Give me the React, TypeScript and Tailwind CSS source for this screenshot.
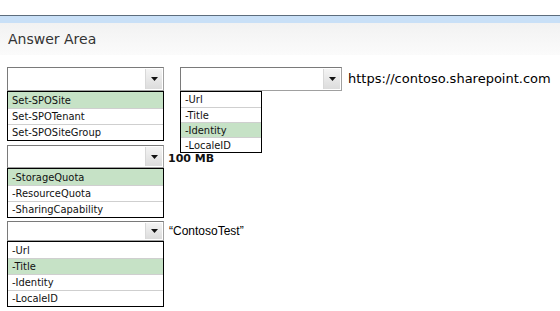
import React from "react";

const Arrow = () => (
  <div className="flex h-full w-[17px] items-center justify-center border-l border-[#d8d8d8] bg-gradient-to-b from-[#f4f4f4] to-[#dcdcdc]">
    <svg width="7" height="4" viewBox="0 0 7 4">
      <polygon points="0,0 7,0 3.5,4" fill="#111" />
    </svg>
  </div>
);

const Select = ({ h }: { h: string }) => (
  <div
    className={`flex ${h} w-full items-stretch justify-end border border-[#a0a0a0] border-t-[#7a7a7a] border-l-[#7a7a7a] bg-white p-[1px]`}
  >
    <Arrow />
  </div>
);

type Item = { t: string; on?: boolean };

const List = ({ items, w, rh }: { items: Item[]; w: string; rh: string }) => (
  <div
    className={`${w} border border-black bg-white`}
    style={{ fontFamily: '"DejaVu Sans Condensed", "Liberation Sans", Arial, sans-serif' }}
  >
    {items.map((it, i) => (
      <div
        key={i}
        className={`flex ${rh} items-center pl-[4px] text-[11px] leading-none text-[#111] ${
          i > 0 ? "border-t border-[#cfcfcf]" : ""
        } ${it.on ? "bg-[#c6e2c6]" : ""}`}
      >
        {it.t}
      </div>
    ))}
  </div>
);

export default function App() {
  return (
    <div
      className="h-[311px] w-[560px] overflow-hidden bg-white"
      style={{ fontFamily: '"Liberation Sans", Arial, sans-serif' }}
    >
      <div className="h-[15px] bg-white" />
      <div className="h-[1px] bg-[#5d6d7d]" />
      <div className="h-[7px] bg-[#c9e0f7]" />
      <div
        className="flex h-[32px] items-center bg-gradient-to-b from-[#f2f2f2] to-[#fbfbfb] pl-[8px] text-[14px] text-[#333]"
        style={{ fontFamily: '"DejaVu Sans", Verdana, sans-serif' }}
      >
        Answer Area
      </div>

      <div className="flex flex-col pl-[7px] pt-[12px]">
        <div className="flex items-start">
          <div className="w-[157px]">
            <Select h="h-[24px]" />
            <List
              w="w-[157px]"
              rh="h-[16px]"
              items={[
                { t: "Set-SPOSite", on: true },
                { t: "Set-SPOTenant" },
                { t: "Set-SPOSiteGroup" },
              ]}
            />
          </div>
          <div className="relative ml-[16px] w-[162px]">
            <Select h="h-[24px]" />
            <div className="absolute left-0 top-full">
              <List
                w="w-[82px]"
                rh="h-[15px]"
                items={[
                  { t: "-Url" },
                  { t: "-Title" },
                  { t: "-Identity", on: true },
                  { t: "-LocaleID" },
                ]}
              />
            </div>
          </div>
          <div
            className="ml-[6px] flex h-[24px] items-center text-[13px] text-black"
            style={{ fontFamily: '"DejaVu Sans", Verdana, sans-serif' }}
          >
            https://contoso.sharepoint.com
          </div>
        </div>

        <div className="mt-[4px] flex items-start">
          <div className="w-[157px]">
            <Select h="h-[23px]" />
            <List
              w="w-[157px]"
              rh="h-[16px]"
              items={[
                { t: "-StorageQuota", on: true },
                { t: "-ResourceQuota" },
                { t: "-SharingCapability" },
              ]}
            />
          </div>
          <div
            className="ml-[4px] mt-[8px] text-[11px] font-bold leading-none text-[#111]"
            style={{ fontFamily: '"DejaVu Sans", Verdana, sans-serif' }}
          >
            100 MB
          </div>
        </div>

        <div className="mt-[3px] flex items-start">
          <div className="w-[157px]">
            <Select h="h-[20px]" />
            <List
              w="w-[157px]"
              rh="h-[16px]"
              items={[
                { t: "-Url" },
                { t: "-Title", on: true },
                { t: "-Identity" },
                { t: "-LocaleID" },
              ]}
            />
          </div>
          <div className="ml-[5px] flex h-[20px] items-center text-[12px] text-black">
            “ContosoTest”
          </div>
        </div>
      </div>
    </div>
  );
}
